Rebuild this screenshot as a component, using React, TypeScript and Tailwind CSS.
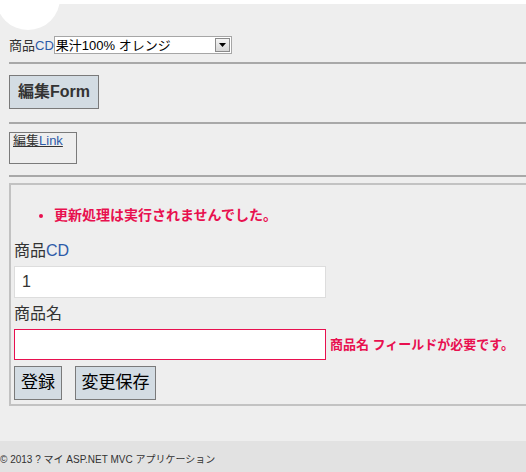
const font = { fontFamily: '"Liberation Sans", "Noto Sans CJK JP", sans-serif' };

export default function App() {
  return (
    <div
      className="relative flex min-h-[472px] w-full flex-col overflow-hidden bg-[#eeeeee] text-[#333333]"
      style={font}
    >
      {/* top strip + decorative circle */}
      <div className="h-[4px] bg-white" />
      <div className="absolute left-[-4px] top-[-34px] h-[64px] w-[64px] rounded-full bg-white" />

      <div className="flex flex-1 flex-col pl-[9px]">
        {/* product select */}
        <div className="mt-[32px] flex h-[18px] items-center text-[13px]">
          <span className="leading-none">
            商品<span className="text-[#2d5aa8]">CD</span>
          </span>
          <div className="flex h-[18px] w-[178px] items-center justify-between border border-[#a6a6a6] bg-white pl-[1px] pr-[1px]">
            <span className="text-[13px] leading-none text-black">果汁100% オレンジ</span>
            <span className="flex h-[14px] w-[15px] items-center justify-center border border-[#8a8a8a] bg-gradient-to-b from-[#f4f4f4] to-[#d6d6d6]">
              <svg width="7" height="4" viewBox="0 0 7 4">
                <path d="M0 0h7L3.5 4z" fill="#000" />
              </svg>
            </span>
          </div>
        </div>

        <hr className="mt-[8px] border-t-[2px] border-[#a8a8a8]" />

        <div className="mt-[11px]">
          <button className="h-[34px] w-[90px] border border-[#7a7a7a] bg-[#d3dce3] text-[16px] font-bold text-[#333333]">
            編集Form
          </button>
        </div>

        <hr className="mt-[13px] border-t-[2px] border-[#a8a8a8]" />

        <div className="mt-[8px] h-[32px] w-[68px] border border-[#7a7a7a] pl-[3px]">
          <a href="#" className="block text-[13px] leading-[16px] text-[#333333] underline">
            編集<span className="text-[#2d5aa8]">Link</span>
          </a>
        </div>

        <hr className="mt-[11px] border-t-[2px] border-[#a8a8a8]" />

        {/* edit fieldset */}
        <div className="mt-[6px] mr-[-4px] h-[223px] border-y-[2px] border-l-[2px] border-[#c2c2c2] pl-[3px]">
          <ul className="mt-[22px] list-disc pl-[28px] text-[14px] font-bold text-[#e8104f] marker:text-[#e8104f]">
            <li className="ml-[12px] leading-[16px]">更新処理は実行されませんでした。</li>
          </ul>

          <div className="mt-[18px] text-[16px] leading-[20px] text-[#333333]">
            商品<span className="text-[#2d5aa8]">CD</span>
          </div>
          <div className="mt-[5px] flex h-[32px] w-[312px] items-center border border-[#dddddd] bg-white pl-[7px] text-[16px] text-[#333333]">
            1
          </div>

          <div className="mt-[6px] text-[16px] leading-[20px] text-[#333333]">商品名</div>
          <div className="mt-[5px] flex items-center">
            <div className="h-[31px] w-[312px] border border-[#e8104f] bg-white" />
            <span className="ml-[4px] text-[13px] font-bold text-[#e8104f]">商品名 フィールドが必要です。</span>
          </div>

          <div className="mt-[6px] flex gap-[13px]">
            <button className="h-[34px] w-[48px] border border-[#7a7a7a] bg-[#d3dce3] text-[17px] text-black">
              登録
            </button>
            <button className="h-[34px] w-[81px] border border-[#7a7a7a] bg-[#d3dce3] text-[17px] text-black">
              変更保存
            </button>
          </div>
        </div>
      </div>

      {/* footer */}
      <footer className="mt-[34px] flex h-[31px] items-center bg-[#e2e2e2] pt-[5px] text-[10px] text-[#333333]">
        © 2013 ? マイ ASP.NET MVC アプリケーション
      </footer>
    </div>
  );
}
